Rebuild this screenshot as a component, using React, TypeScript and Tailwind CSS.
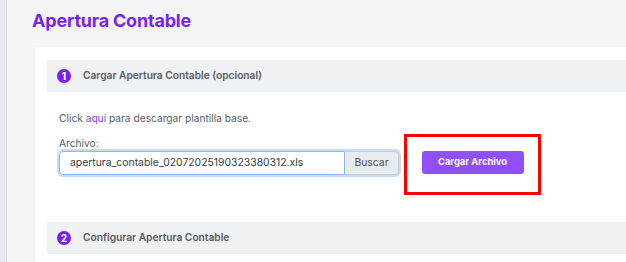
import React from 'react'

const StepHeader = ({ n, title }: { n: number; title: string }) => (
    <div className="flex items-center h-[32px] bg-[#f0f1f3] pl-[10px]">
        <span className="flex items-center justify-center w-[14px] h-[14px] rounded-full bg-[#7a1ff2] text-white text-[10px] font-bold leading-none">
            {n}
        </span>
        <span className="ml-[12px] text-[10.2px] font-semibold text-[#5a5c63]">{title}</span>
    </div>
)

const App = () => {
    return (
        <div className="flex w-[626px] h-[262px] overflow-hidden bg-[#f4f5f7] font-['Inter',sans-serif]">
            {/* left edge */}
            <div className="w-[7px] shrink-0 bg-[#e9eaed] border-r border-[#dcdde1]" />

            <div className="flex-1 flex flex-col">
                <h1 className="shrink-0 pl-[25px] pt-[7px] h-[47px] text-[18px] font-bold text-[#7a1ff2] tracking-[-0.2px]">
                    Apertura Contable
                </h1>

                <div className="ml-[28px] bg-white pt-[13px] pl-[12px] flex-1 shrink-0">
                    <StepHeader n={1} title="Cargar Apertura Contable (opcional)" />

                    <div className="pl-[12px] pt-[18px]">
                        <p className="text-[10.2px] text-[#5a5c63] leading-[16px]">
                            Click <span className="text-[#7a3ff2]">aquí</span> para descargar plantilla base.
                        </p>

                        <div className="flex items-start mt-[11px]">
                            <div>
                                <label className="block text-[10.2px] text-[#5a5c63] leading-[12px]">Archivo:</label>
                                <div className="flex mt-[2px] h-[24px] rounded-[4px] shadow-[0_0_0_2px_#c7dcfc]">
                                    <div className="flex items-center w-[286px] px-[10px] border border-[#86b7fe] rounded-l-[4px] bg-white text-[10.4px] text-[#3a3c42]">
                                        apertura_contable_02072025190323380312.xls
                                    </div>
                                    <div className="flex items-center justify-center w-[54px] border border-l-0 border-[#c9cdd3] rounded-r-[4px] bg-[#e9ecef] text-[10.4px] text-[#4a4c52]">
                                        Buscar
                                    </div>
                                </div>
                            </div>

                            <div className="ml-[5px] mt-[-3px] w-[137px] h-[61px] border-[3px] border-[#ff0000] flex items-start justify-center pt-[14px]">
                                <button className="w-[102px] h-[23px] rounded-[3px] bg-[#914ffa] text-white text-[9.4px] font-bold">
                                    Cargar Archivo
                                </button>
                            </div>
                        </div>
                    </div>

                    <div className="mt-[27px]">
                        <StepHeader n={2} title="Configurar Apertura Contable" />
                    </div>
                </div>
            </div>
        </div>
    )
}

export default App
